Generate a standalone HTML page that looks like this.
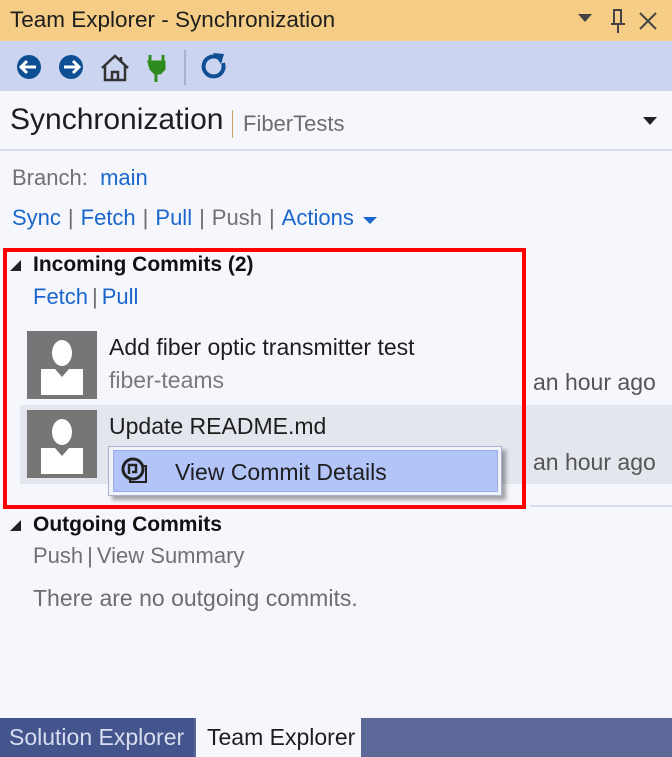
<!DOCTYPE html>
<html><head><style>
*{margin:0;padding:0;box-sizing:border-box}
body{width:672px;height:757px;background:#f5f7fc;font-family:"Liberation Sans",sans-serif;position:relative;overflow:hidden;color:#1e1e1e;font-size:23px}
.a{position:absolute;white-space:nowrap}
.l{color:#1a66cc}
.g{color:#717171}
.s{color:#6d6d6d;margin:0 4px}
.w .s{margin:0 7px}
</style></head><body>
<div class="a" style="left:0;top:0;width:672px;height:41px;background:#f5cd86"></div>
<div class="a" style="left:10px;top:7px;font-size:22.5px;color:#1e1e1e">Team Explorer - Synchronization</div>
<div class="a" style="left:578px;top:14px;width:0;height:0;border-left:7px solid transparent;border-right:7px solid transparent;border-top:8px solid #444"></div>
<svg class="a" style="left:608px;top:8px" width="20" height="26"><path d="M5 2h9M6 2v14M13 2v14M3 16h14M10 16v9" stroke="#444" stroke-width="2" fill="none"/></svg>
<svg class="a" style="left:637px;top:10px" width="22" height="22"><path d="M3 3L19 19M19 3L3 19" stroke="#444" stroke-width="2"/></svg>
<div class="a" style="left:0;top:41px;width:672px;height:50px;background:#ccd5ef"></div>
<svg class="a" style="left:0;top:41px" width="240" height="50">
<circle cx="29" cy="26" r="12" fill="#0e4f94"/><path d="M36 26H22M27 20l-6 6 6 6" stroke="#fff" stroke-width="3" fill="none"/>
<circle cx="71" cy="26" r="12" fill="#0e4f94"/><path d="M64 26h14M73 20l6 6-6 6" stroke="#fff" stroke-width="3" fill="none"/>
<path d="M102 27l13-12 13 12M105 25v14h20V25M112 39v-8h6v8M121 16v5" stroke="#333" stroke-width="2.5" fill="none"/>
<path d="M150 14v7M163 14v7M149 21h15v7l-4 4h-5l-4-4z M156 32v9" stroke="#2e8b1e" stroke-width="3" fill="#2e8b1e"/>
<line x1="185" y1="9" x2="185" y2="44" stroke="#9aa6c3" stroke-width="1.5"/>
<path d="M223 22a10 10 0 1 1-4-5" stroke="#0e4f94" stroke-width="4" fill="none"/><path d="M213 12l11 1-3 10z" fill="#0e4f94"/>
</svg>
<div class="a" style="left:0;top:149px;width:672px;height:2px;background:#d6dced"></div>
<div class="a" style="left:10px;top:103px;font-size:30px;color:#1e1e1e">Synchronization</div>
<div class="a" style="left:232px;top:110px;width:1px;height:28px;background:#c6a16e"></div>
<div class="a" style="left:243px;top:111px;font-size:22px;color:#6d6d6d">FiberTests</div>
<div class="a" style="left:643px;top:117px;width:0;height:0;border-left:7px solid transparent;border-right:7px solid transparent;border-top:8px solid #222"></div>
<div class="a" style="left:12px;top:165px;font-size:22px"><span class="g">Branch:</span>&nbsp; <span class="l">main</span></div>
<div class="a w" style="left:12px;top:205px;font-size:22px"><span class="l">Sync</span><span class="s">|</span><span class="l">Fetch</span><span class="s">|</span><span class="l">Pull</span><span class="s">|</span><span class="g">Push</span><span class="s">|</span><span class="l">Actions</span></div>
<div class="a" style="left:363px;top:217px;width:0;height:0;border-left:7px solid transparent;border-right:7px solid transparent;border-top:7px solid #1a66cc"></div>
<div class="a" style="left:20px;top:405px;width:652px;height:79px;background:#e4e6ee"></div>
<div class="a" style="left:530px;top:505px;width:142px;height:2px;background:#d6dced"></div>
<div class="a" style="left:10px;top:260px;width:0;height:0;border-left:11px solid transparent;border-bottom:11px solid #222"></div>
<div class="a" style="left:33px;top:253px;font-size:21px;font-weight:bold;color:#111">Incoming Commits (2)</div>
<div class="a" style="left:33px;top:284px;font-size:22px"><span class="l">Fetch</span><span class="s">|</span><span class="l">Pull</span></div>
<svg class="a" style="left:27px;top:331px" width="70" height="68"><rect width="70" height="68" fill="#767676"/><ellipse cx="35" cy="22" rx="10" ry="13" fill="#fff"/><path d="M14 38h14l7 8 7-8h14v26H14z" fill="#fff"/></svg>
<svg class="a" style="left:27px;top:410px" width="70" height="68"><rect width="70" height="68" fill="#767676"/><ellipse cx="35" cy="22" rx="10" ry="13" fill="#fff"/><path d="M14 38h14l7 8 7-8h14v26H14z" fill="#fff"/></svg>
<div class="a" style="left:109px;top:334px">Add fiber optic transmitter test</div>
<div class="a" style="left:109px;top:367px;color:#7a7a7a">fiber-teams</div>
<div class="a" style="left:533px;top:369px;color:#555">an hour ago</div>
<div class="a" style="left:109px;top:413px">Update README.md</div>
<div class="a" style="left:533px;top:449px;color:#555">an hour ago</div>
<div class="a" style="left:108px;top:446px;width:394px;height:50px;background:#f2f3f8;border:1px solid #a8b3cf;box-shadow:4px 4px 4px rgba(0,0,0,0.35)"></div>
<div class="a" style="left:113px;top:450px;width:385px;height:42px;background:#b2c4f8;border:1px solid #99acee"></div>
<svg class="a" style="left:120px;top:456px" width="30" height="30"><rect x="10" y="10" width="16" height="16" fill="none" stroke="#222" stroke-width="2"/><circle cx="13" cy="13" r="10" fill="#b2c4f8" stroke="#222" stroke-width="3"/><path d="M9 18V9h7v7h-4" stroke="#222" stroke-width="2.5" fill="none"/></svg>
<div class="a" style="left:175px;top:459px;color:#1e1e1e">View Commit Details</div>
<div class="a" style="left:3px;top:248px;width:523px;height:261px;border:4px solid #f00"></div>
<div class="a" style="left:10px;top:520px;width:0;height:0;border-left:11px solid transparent;border-bottom:11px solid #222"></div>
<div class="a" style="left:33px;top:513px;font-size:21px;font-weight:bold;color:#111">Outgoing Commits</div>
<div class="a" style="left:33px;top:543px;font-size:22px"><span class="g">Push</span><span class="s">|</span><span class="g">View Summary</span></div>
<div class="a" style="left:33px;top:585px;color:#6d6d6d">There are no outgoing commits.</div>
<div class="a" style="left:0;top:718px;width:672px;height:39px;background:#5b6898"></div>
<div class="a" style="left:0;top:718px;width:194px;height:39px;background:#44548d"></div>
<div class="a" style="left:9px;top:724px;color:#d8def0">Solution Explorer</div>
<div class="a" style="left:196px;top:718px;width:165px;height:39px;background:#f5f7fc"></div>
<div class="a" style="left:207px;top:724px;color:#1e1e1e">Team Explorer</div>
</body></html>
